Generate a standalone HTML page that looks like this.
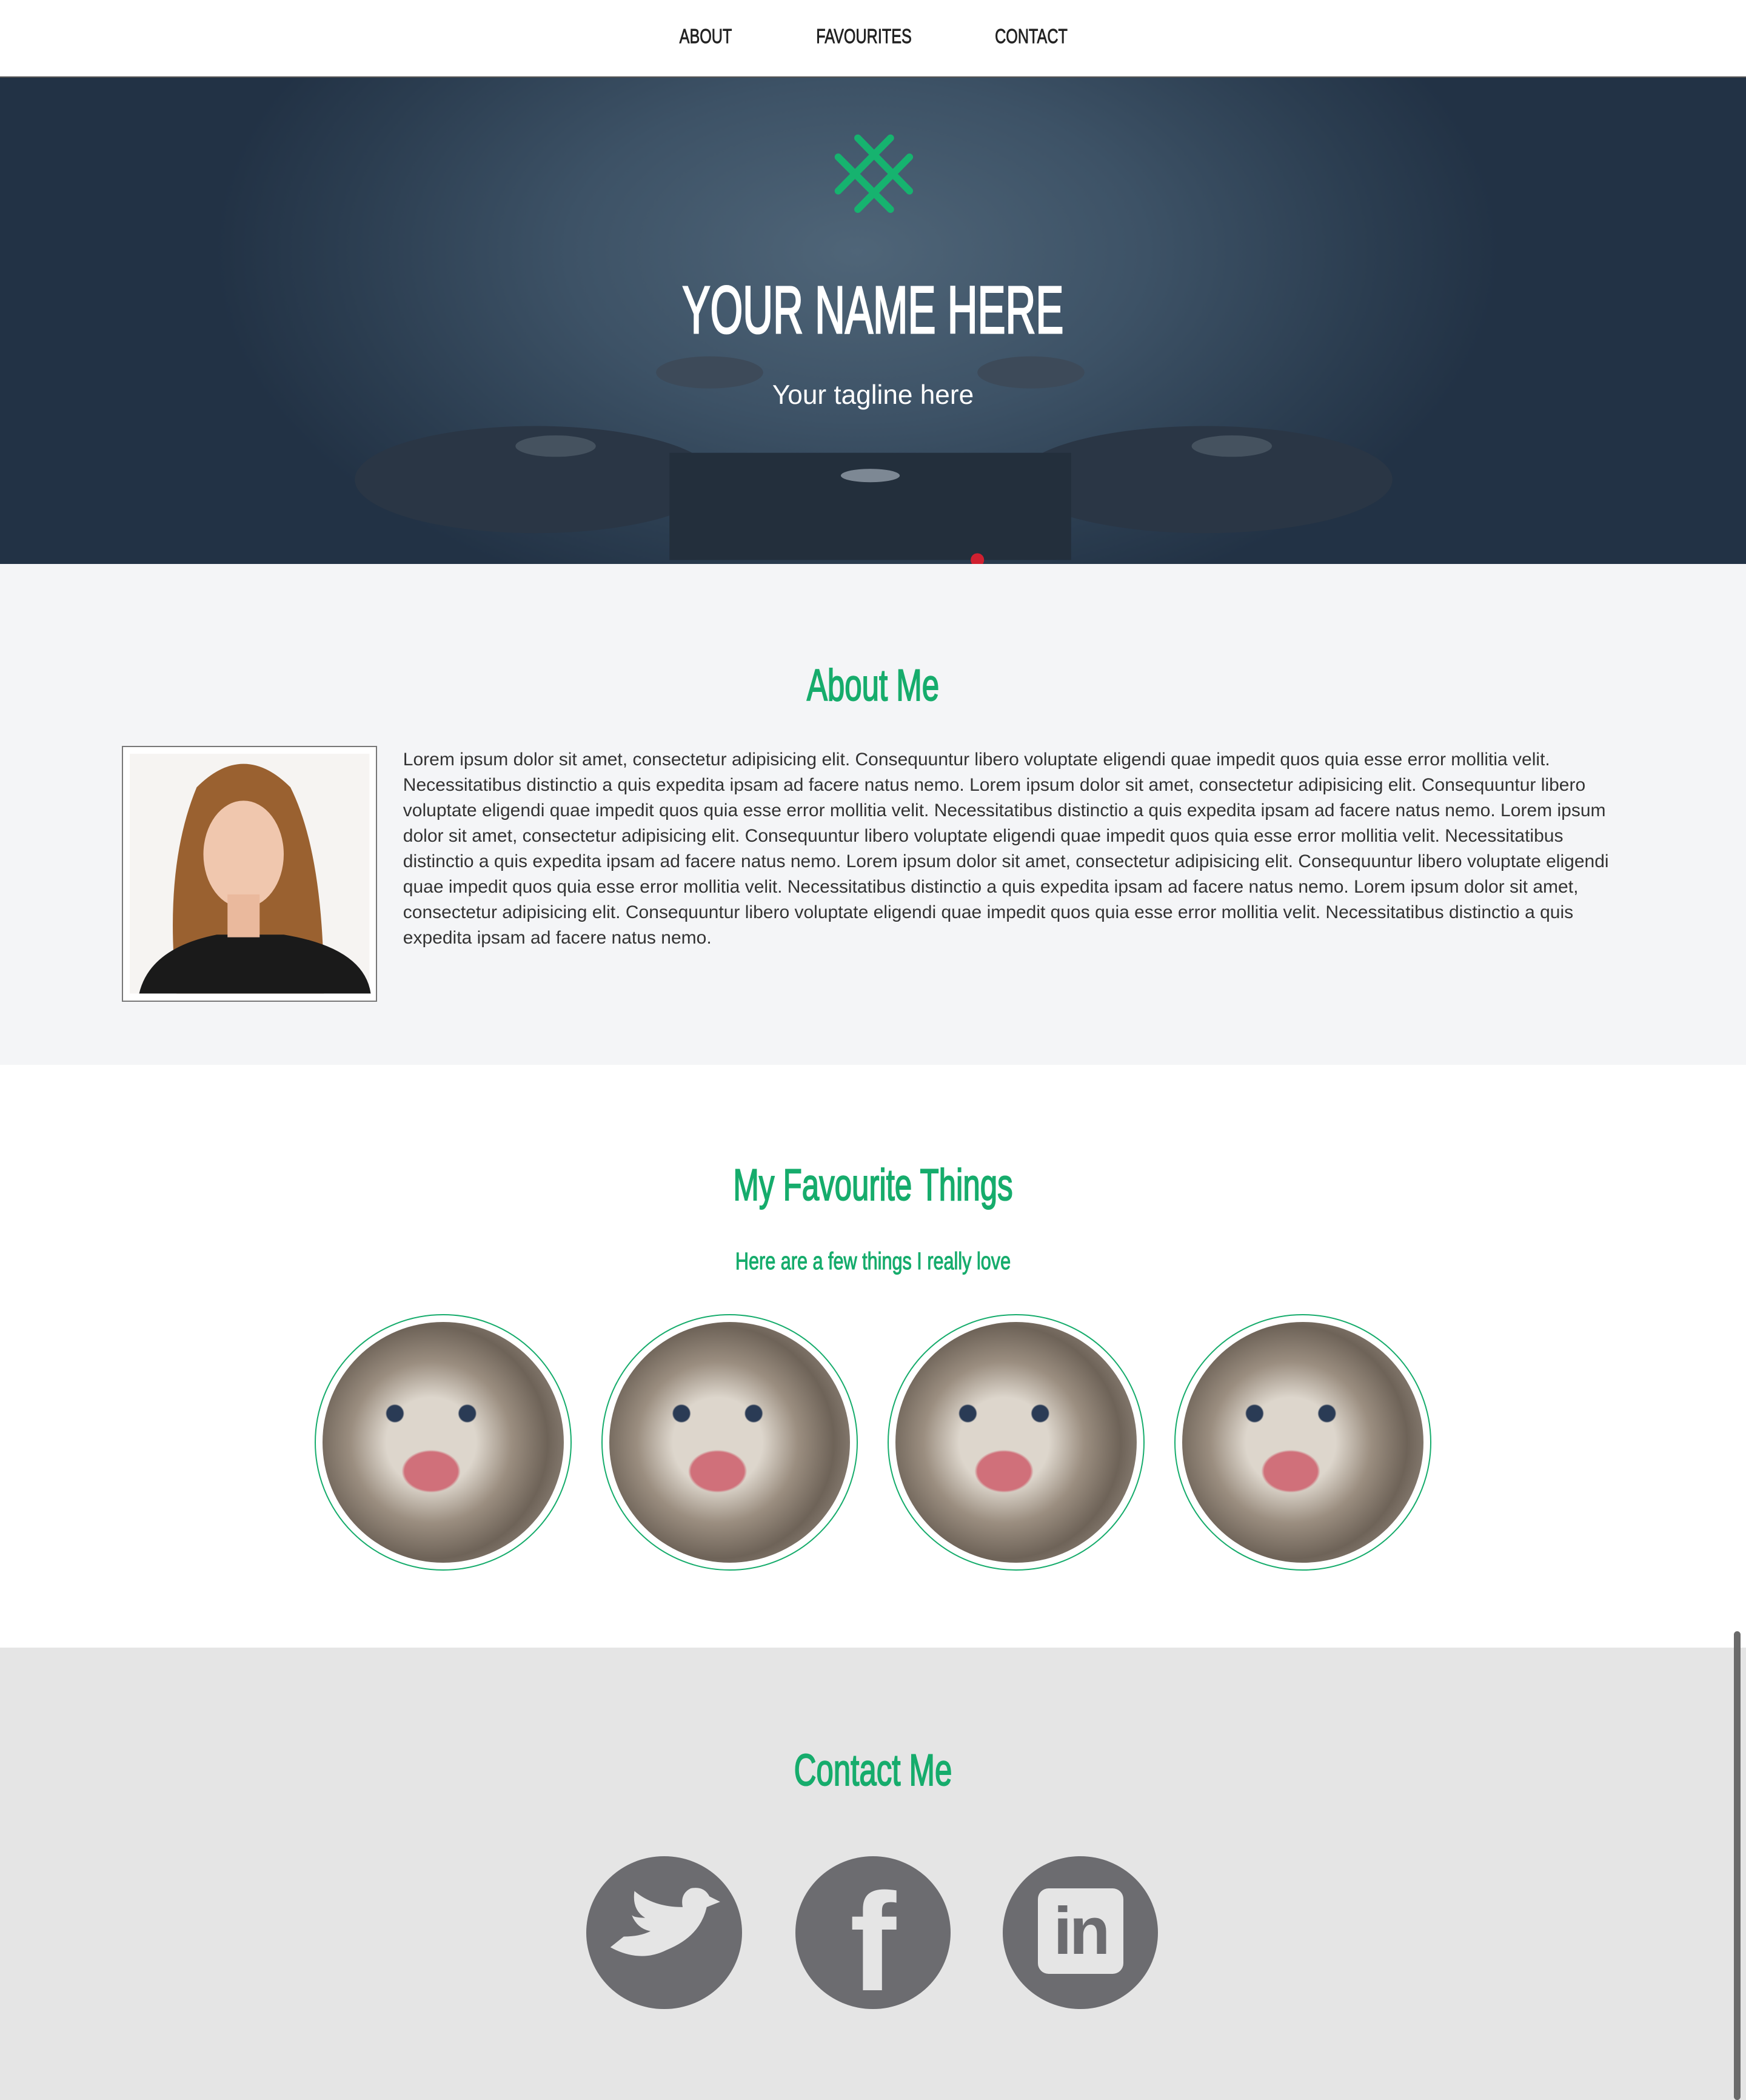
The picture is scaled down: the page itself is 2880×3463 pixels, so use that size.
<!DOCTYPE html>
<html><head><meta charset="utf-8">
<style>
html,body{margin:0;padding:0;}
body{zoom:2.2086;width:1304px;height:1568px;overflow:hidden;font-family:"Liberation Sans",Arial,sans-serif;background:#fff;position:relative}
.cond{font-family:"Liberation Sans Narrow","Liberation Sans",sans-serif;}
nav{height:57px;border-bottom:1px solid #555;position:relative;background:#fff}
nav a{position:absolute;top:19px;font-size:15px;color:#222;text-decoration:none;transform:translateX(-50%) scaleX(.76);-webkit-text-stroke:.4px #222}
.hero{position:absolute;top:58px;left:0;width:1304px;height:363px;overflow:hidden;
background:radial-gradient(ellipse 480px 280px at 640px 130px,#4f6578 0%,#3d5266 45%,#2b3d50 80%,#223245 100%);}
.hero h1{position:absolute;top:145px;width:100%;text-align:center;margin:0;color:#fff;font-size:50px;font-weight:normal;transform:scaleX(.625);-webkit-text-stroke:1.4px #fff}
.hero p{position:absolute;top:226px;width:100%;text-align:center;margin:0;color:#fff;font-size:20px}
.about{position:absolute;top:421px;left:0;width:1304px;height:374px;background:#f4f5f7}
h2{position:absolute;left:0;width:1304px;text-align:center;margin:0;color:#16ac6c;font-weight:normal;font-size:33px;transform:scaleX(.7);-webkit-text-stroke:.9px #16ac6c}
.photo{position:absolute;left:91px;top:136px;width:189px;height:189px;border:1px solid #777;background:#fff}
.txt{position:absolute;left:301px;top:137px;width:905px;font-size:13.6px;line-height:19px;color:#333}
.fav{position:absolute;top:795px;left:0;width:1304px;height:435px;background:#fff}
.circ{position:absolute;top:186px;width:190px;height:190px;border:1px solid #16ac6c;border-radius:50%}
.circ div{position:absolute;left:5px;top:5px;width:180px;height:180px;border-radius:50%;
background:radial-gradient(circle at 30% 38%,#2a3b55 0 6px,transparent 7px),radial-gradient(circle at 60% 38%,#2a3b55 0 6px,transparent 7px),radial-gradient(ellipse 22px 16px at 45% 62%,#d0707a 0 90%,transparent 100%),radial-gradient(circle at 45% 50%,#ddd6cc 0 25%,#9b8e80 45%,#6e6358 65%,#b6aba0 100%);}
.contact{position:absolute;top:1230px;left:0;width:1304px;height:338px;background:#e5e5e5}
.ic{position:absolute;top:156px;width:116px;height:114px;border-radius:50%;background:#6c6c70}
.scroll{position:absolute;left:1295px;top:1218px;width:5px;height:350px;background:#6a6a6a;border-radius:3px}
</style></head><body>
<nav class="cond">
<a style="left:527px">ABOUT</a><a style="left:645px">FAVOURITES</a><a style="left:770px">CONTACT</a>
</nav>
<div class="hero">
<svg style="position:absolute;left:240px;top:200px" width="830" height="170" viewBox="0 0 830 170">
<ellipse cx="160" cy="100" rx="135" ry="40" fill="#2a3645"/>
<ellipse cx="660" cy="100" rx="140" ry="40" fill="#2a3645"/>
<rect x="260" y="80" width="300" height="80" fill="#232f3c"/>
<ellipse cx="290" cy="20" rx="40" ry="12" fill="#3d4a59"/>
<ellipse cx="530" cy="20" rx="40" ry="12" fill="#3d4a59"/>
<ellipse cx="175" cy="75" rx="30" ry="8" fill="#45525f"/>
<ellipse cx="680" cy="75" rx="30" ry="8" fill="#45525f"/>
<ellipse cx="410" cy="97" rx="22" ry="5" fill="#7d8894"/>
<circle cx="490" cy="160" r="5" fill="#d02030"/>
</svg>
<svg style="position:absolute;left:617px;top:37px" width="71" height="71" viewBox="60 30 160 160">
<g stroke="#16b36f" stroke-width="12" stroke-linecap="round">
<line x1="113" y1="48" x2="200" y2="137"/><line x1="80" y1="80" x2="168" y2="168"/>
<line x1="168" y1="48" x2="80" y2="137"/><line x1="200" y1="80" x2="113" y2="168"/></g></svg>
<h1 class="cond">YOUR NAME HERE</h1>
<p>Your tagline here</p>
</div>
<div class="about">
<h2 class="cond" style="top:72px">About Me</h2>
<div class="photo"><svg width="189" height="189" viewBox="0 0 189 189" style="position:absolute;left:0;top:0">
<rect x="5" y="5" width="179" height="179" fill="#f6f4f2"/>
<path d="M40 184 Q30 90 55 30 Q90 -5 125 30 Q150 80 150 184 Z" fill="#9a6130"/>
<path d="M12 184 Q20 150 70 140 L120 140 Q180 150 185 184 Z" fill="#1a1a1a"/>
<ellipse cx="90" cy="80" rx="30" ry="40" fill="#f0c7ae"/>
<rect x="78" y="110" width="24" height="32" fill="#eab99d"/>
</svg></div>
<div class="txt">Lorem ipsum dolor sit amet, consectetur adipisicing elit. Consequuntur libero voluptate eligendi quae impedit quos quia esse error mollitia velit. Necessitatibus distinctio a quis expedita ipsam ad facere natus nemo. Lorem ipsum dolor sit amet, consectetur adipisicing elit. Consequuntur libero voluptate eligendi quae impedit quos quia esse error mollitia velit. Necessitatibus distinctio a quis expedita ipsam ad facere natus nemo. Lorem ipsum dolor sit amet, consectetur adipisicing elit. Consequuntur libero voluptate eligendi quae impedit quos quia esse error mollitia velit. Necessitatibus distinctio a quis expedita ipsam ad facere natus nemo. Lorem ipsum dolor sit amet, consectetur adipisicing elit. Consequuntur libero voluptate eligendi quae impedit quos quia esse error mollitia velit. Necessitatibus distinctio a quis expedita ipsam ad facere natus nemo. Lorem ipsum dolor sit amet, consectetur adipisicing elit. Consequuntur libero voluptate eligendi quae impedit quos quia esse error mollitia velit. Necessitatibus distinctio a quis expedita ipsam ad facere natus nemo.</div>
</div>
<div class="fav">
<h2 class="cond" style="top:71px">My Favourite Things</h2>
<div class="cond" style="position:absolute;top:137px;width:100%;text-align:center;color:#16ac6c;font-size:18px;transform:scaleX(.77);-webkit-text-stroke:.5px #16ac6c">Here are a few things I really love</div>
<div class="circ" style="left:235px"><div></div></div>
<div class="circ" style="left:449px"><div></div></div>
<div class="circ" style="left:663px"><div></div></div>
<div class="circ" style="left:877px"><div></div></div>
</div>
<div class="contact">
<h2 class="cond" style="top:73px">Contact Me</h2>
<div class="ic" style="left:438px"><svg width="116" height="114" viewBox="0 0 116 114"><path d="M18 68 Q40 80 60 70 Q85 60 90 38 L100 34 L92 30 Q88 22 78 24 Q70 28 72 38 Q50 38 36 26 Q34 40 44 46 Q36 46 34 44 Q38 54 48 56 Q40 60 28 60 Z" fill="#e5e5e5"/></svg></div>
<div class="ic" style="left:594px"><div style="position:absolute;left:0;width:116px;top:12px;text-align:center;color:#e5e5e5;font-size:104px;font-weight:bold;line-height:1">f</div></div>
<div class="ic" style="left:749px"><div style="position:absolute;left:26px;top:24px;width:64px;height:64px;border-radius:8px;background:#e5e5e5;color:#6c6c70;font-weight:bold;font-size:50px;line-height:64px;text-align:center;letter-spacing:-2px">in</div></div>
</div>
<div class="scroll"></div>
</body></html>
